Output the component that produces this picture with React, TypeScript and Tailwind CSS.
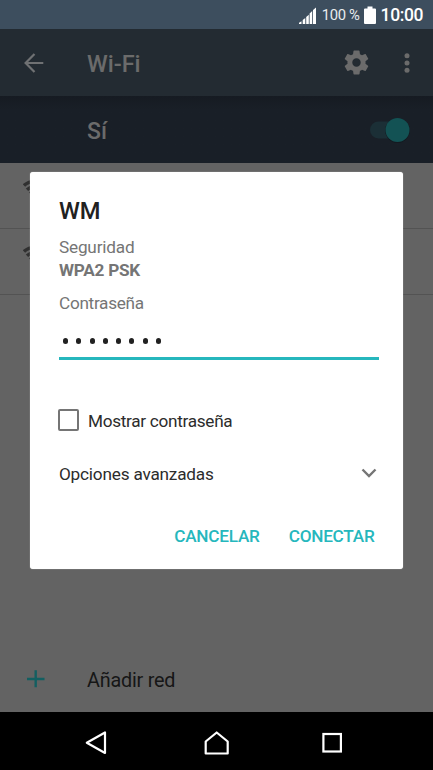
import React from "react";

function StatusBar() {
  return (
    <div className="flex h-[29px] shrink-0 items-center justify-end bg-[#3d4e5e] pr-[10px] text-white">
      <svg width="17" height="18" viewBox="0 0 17 18" className="mr-[6px] mt-[2px]">
        <path d="M0 17v-1.300l2.500-1.500V17zM3.700 17v-4l2.600-2v6zM7.200 17v-7l2.600-2.200V17zM10.600 17V6.500l2.600-2.500V17zM14 17V3l3-2.500V17z" fill="#fff" />
      </svg>
      <span className="mr-[4px] mt-[2px] text-[14.8px] leading-[29px] tracking-[-0.3px] text-[#e8ebee]">100 %</span>
      <svg width="12" height="18" viewBox="0 0 12 18" className="mr-[5px]">
        <path d="M3.500 0.500h5V2.500H11a1 1 0 0 1 1 1V17a1 1 0 0 1-1 1H1a1 1 0 0 1-1-1V3.500a1 1 0 0 1 1-1h2.500z" fill="#fff" />
      </svg>
      <span className="mt-[2px] text-[17.5px] font-medium leading-[29px] tracking-[-0.4px]">10:00</span>
    </div>
  );
}

function AppBar() {
  return (
    <div className="flex h-[67px] shrink-0 items-center bg-[#232b32] text-[#6b6b6b]">
      <svg width="20" height="20" viewBox="0 0 20 20" className="ml-[24px] mr-[43px]" fill="none" stroke="#6f7173" strokeWidth="2.200">
        <path d="M19.300 10H2M10.500 1L1.600 10l8.900 9" />
      </svg>
      <span className="mt-[2px] flex-1 text-[23.5px] font-medium leading-[30px]">Wi-Fi</span>
      <svg width="29" height="29" viewBox="0 0 24 24" className="mr-[28px]" fill="#6b6b6b">
        <path d="M19.430 12.980c.04-.32.07-.64.07-.98s-.03-.66-.07-.98l2.110-1.650c.19-.15.24-.42.12-.64l-2-3.460c-.12-.22-.39-.3-.61-.22l-2.490 1c-.52-.4-1.080-.73-1.690-.98l-.38-2.650C14.460 2.180 14.250 2 14 2h-4c-.25 0-.46.18-.49.42l-.38 2.650c-.61.25-1.170.59-1.690.98l-2.490-1c-.23-.09-.49 0-.61.22l-2 3.460c-.13.22-.07.49.12.64l2.110 1.650c-.04.32-.07.65-.07.98s.03.66.07.98l-2.110 1.650c-.19.15-.24.42-.12.64l2 3.460c.12.22.39.3.61.22l2.490-1c.52.4 1.080.73 1.690.98l.38 2.650c.03.24.24.42.49.42h4c.25 0 .46-.18.49-.42l.38-2.650c.61-.25 1.170-.59 1.690-.98l2.490 1c.23.09.49 0 .61-.22l2-3.460c.12-.22.07-.49-.12-.64zM12 15.500c-1.930 0-3.500-1.570-3.500-3.500s1.570-3.500 3.500-3.500 3.500 1.570 3.500 3.500-1.570 3.500-3.500 3.500z" />
      </svg>
      <svg width="16" height="22" viewBox="0 0 16 22" className="mr-[18.5px]" fill="#6b6b6b">
        <circle cx="8" cy="3.800" r="2.500" />
        <circle cx="8" cy="11" r="2.500" />
        <circle cx="8" cy="18.200" r="2.500" />
      </svg>
    </div>
  );
}

function WifiSwitch() {
  return (
    <div className="flex h-[67px] shrink-0 items-center justify-between bg-[#191f27] bg-linear-to-b from-[#161b22] to-[#191f27] to-20% pl-[87px] pr-[23px]">
      <span className="pt-[5px] text-[23px] font-medium leading-[30px] text-[#6b6b6b]">Sí</span>
      <svg width="40" height="26" viewBox="0 0 40 26" className="mt-px">
        <rect x="0" y="4.500" width="34" height="17" rx="8.500" fill="#1b2f36" />
        <circle cx="27.500" cy="13.500" r="12.300" fill="#13181f" />
        <circle cx="27.500" cy="13" r="12" fill="#135254" />
      </svg>
    </div>
  );
}

function NetworkRow() {
  return (
    <div className="h-[66px] border-b border-[#535353] pl-[23px] pt-[16px]">
      <svg width="24" height="20" viewBox="0 0 24 20" fill="none" stroke="#303030" strokeWidth="3.400">
        <path d="M1 6.500C7 1 17 1 23 6.500M4 10.800c5-4.600 11-4.600 16 0M7 14.500c3.300-2.900 6.700-2.900 10 0" />
        <path d="M9 16.500h6L12 19.500z" fill="#303030" stroke="none" />
      </svg>
    </div>
  );
}

function PasswordDialog() {
  return (
    <div className="absolute left-[30px] top-[172px] flex h-[397px] w-[373px] flex-col rounded-[3px] bg-white pl-[29px] pr-[24px] pt-[24px] text-[17.2px] tracking-[-0.3px] text-[#757575] shadow-[0_0_1px_#ddd]">
      <h2 className="h-[30px] text-[23.7px] font-medium leading-[30px] tracking-normal text-[#212121]">WM</h2>
      <p className="mt-[10px] h-[23px] leading-[23px] tracking-[-0.2px]">Seguridad</p>
      <p className="h-[23px] font-bold leading-[23px] tracking-[-0.25px]">WPA2 PSK</p>
      <p className="mt-[9px] h-[23px] leading-[24px]">Contraseña</p>
      <div className="flex h-[46px] items-center gap-[8.25px] border-b-[3px] border-[#26b7bd] pl-[4px] pt-[11px]">
        {Array.from({ length: 8 }, (_, i) => (
          <span key={i} className="h-[5.5px] w-[5px] rounded-full bg-[#212121]" />
        ))}
      </div>
      <label className="-ml-px mt-[49px] flex h-[22px] items-center gap-[9px] text-[#2c2c2c]">
        <span className="h-[22px] w-[21px] rounded-[2px] border-2 border-[#757575]" />
        <span className="mt-px leading-[22px]">Mostrar contraseña</span>
      </label>
      <div className="mt-[31px] flex h-[24px] items-center justify-between text-[#2c2c2c]">
        <span className="leading-[24px] tracking-[-0.2px]">Opciones avanzadas</span>
        <svg width="16" height="10" viewBox="0 0 16 10" className="mb-[2px] mr-[2px]" fill="none" stroke="#757575" strokeWidth="2.400">
          <path d="M1.500 1.500L8 8l6.500-6.500" />
        </svg>
      </div>
      <div className="mt-[38px] flex h-[24px] justify-end gap-[29px] pr-[4.5px] font-medium leading-[24px] tracking-[-0.25px] text-[#26b7bd]">
        <button className="whitespace-nowrap">CANCELAR</button>
        <button className="whitespace-nowrap">CONECTAR</button>
      </div>
    </div>
  );
}

function NavBar() {
  return (
    <div className="flex h-[58px] shrink-0 items-center bg-black pl-[85px] pt-[4px]">
      <svg width="24" height="24" viewBox="0 0 24 24" className="mr-[95px]" fill="none" stroke="#fff" strokeWidth="2.200" strokeLinejoin="round">
        <path d="M20 1.500v20.500L1.800 11.800z" />
      </svg>
      <svg width="26" height="24" viewBox="0 0 26 24" className="mr-[91px]" fill="none" stroke="#fff" strokeWidth="2.200" strokeLinejoin="round">
        <path d="M1.700 22.500V10.500L12.700 1.500l11 9v12z" />
      </svg>
      <svg width="22" height="22" viewBox="0 0 22 22" fill="none" stroke="#fff" strokeWidth="2.200">
        <rect x="2.400" y="2" width="17.500" height="17.500" />
      </svg>
    </div>
  );
}

export default function App() {
  return (
    <div className="relative flex h-[770px] w-[433px] flex-col overflow-hidden bg-[#636363] font-['Roboto',sans-serif]">
      <StatusBar />
      <AppBar />
      <WifiSwitch />
      <div className="flex flex-1 flex-col">
        <NetworkRow />
        <NetworkRow />
        <div className="mt-auto flex h-[66px] items-center pl-[27px]">
          <svg width="18" height="18" viewBox="0 0 18 18" className="mr-[42px]" stroke="#135f61" strokeWidth="2.400">
            <path d="M0 9h17.500M8.700 0.300v17" />
          </svg>
          <span className="pt-[3px] text-[19.8px] leading-[26px] tracking-[-0.2px] text-[#161616]">Añadir red</span>
        </div>
      </div>
      <NavBar />
      <PasswordDialog />
    </div>
  );
}
